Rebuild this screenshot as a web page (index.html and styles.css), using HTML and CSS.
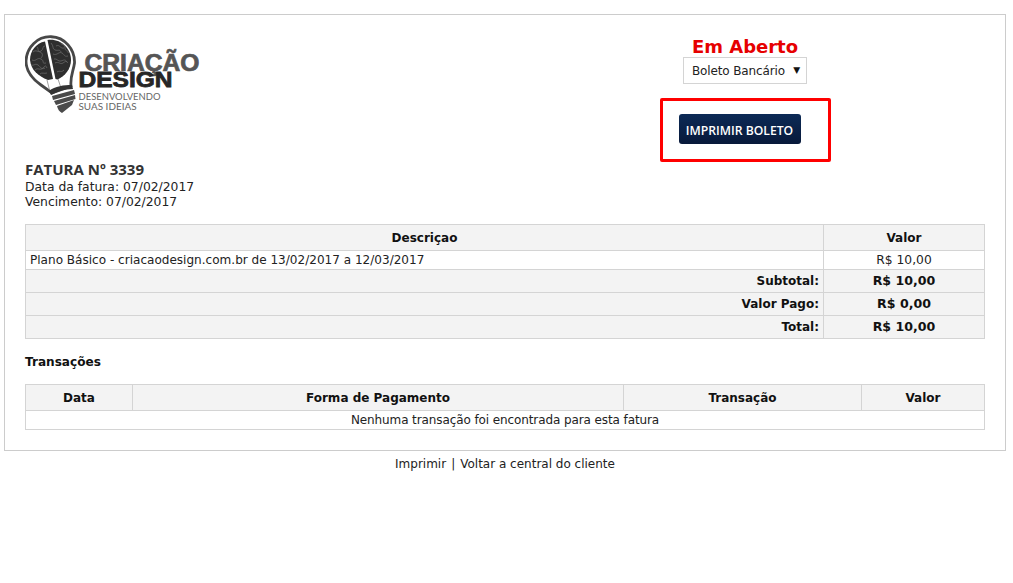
FILE: index.html
```html
<!DOCTYPE html>
<html lang="pt-BR">
<head>
<meta charset="utf-8">
<title>Fatura 3339</title>
<link rel="stylesheet" href="styles.css">
</head>
<body>
<main class="invoice">
  <header class="top">
    <div class="brand">
      <svg class="logo" viewBox="25 34 180 82" width="180" height="82" aria-label="Criação Design">
        <path d="M41 85C31 78 26 70 26 61A24 25 0 1 1 74.500 63C73.500 71 70 76 71 86L52 93Z" fill="#fff" stroke="#484848" stroke-width="2.800"/>
        <path d="M45 41.500C36 43 30 51 30 60C31 70 38 76 48 80L53 79Z" fill="#2e2e2e"/>
        <path d="M47.500 40C60 38 71 48 71 60C71 69 65 76 57.500 79.500L55.500 79Z" fill="#2e2e2e"/>
        <path class="fold" d="M33 52c3-3 5 1 8-1s1-5 4-5M32 60c4 2 5-3 9-1s0 5 5 4M35 70c3-3 5 1 8-2s2-3 4 0M37 47c2 2 0 4 3 5s3 4 1 6M31 65c3 1 4-2 7 0s3 5 7 3M40 74c2-2 4 0 7-1M56 46c4-2 4 3 8 2M53 54c4 2 6-3 9-1s2 4 6 3M55 63c4-2 5 2 8 0s3-2 5 0M57 72c3-2 4 1 7-2M51 43c3 3 1 6 4 7s5-1 6 2M60 42c1 3 5 2 5 6s4 2 3 5M54 59c3-1 4 3 7 2s4-2 6 1"/>
        <path class="wire" d="M47 80L49.500 90M58 79L61 88"/>
        <path d="M49 91C55 86 64 85 72 85L73 89C65 89 58 91 51 95Z" fill="#333"/>
        <path d="M52 96L74 90L75 94L53 100ZM54 101L75 95L75.500 99L56 105ZM57 106L74 100L72 105L62 113Q58 111 57 106Z" fill="#4a4a4a"/>
        <text class="logo-top" x="84.500" y="71" textLength="115" lengthAdjust="spacingAndGlyphs">CRIAÇÃO</text>
        <text class="logo-main" x="78.500" y="87" textLength="94" lengthAdjust="spacingAndGlyphs">DESIGN</text>
        <text class="logo-sub" x="78.500" y="100" textLength="82" lengthAdjust="spacingAndGlyphs">DESENVOLVENDO</text>
        <text class="logo-sub" x="78.500" y="110" textLength="58" lengthAdjust="spacingAndGlyphs">SUAS IDEIAS</text>
      </svg>
      <h1 class="invoice-no">FATURA Nº 3339</h1>
      <div class="dates">
        <p class="meta">Data da fatura: 07/02/2017</p>
        <p class="meta">Vencimento: 07/02/2017</p>
      </div>
    </div>
    <div class="status">
      <div class="status-text">Em Aberto</div>
      <div class="method">Boleto Bancário<span class="caret">▼</span></div>
      <div class="frame"><a class="print-btn">IMPRIMIR BOLETO</a></div>
    </div>
  </header>

  <table class="grid items">
    <thead>
      <tr><th>Descriçao</th><th class="col-val">Valor</th></tr>
    </thead>
    <tbody>
      <tr class="line"><td class="desc">Plano Básico - criacaodesign.com.br de 13/02/2017 a 12/03/2017</td><td class="money">R$ 10,00</td></tr>
      <tr class="sum"><td>Subtotal:</td><td>R$ 10,00</td></tr>
      <tr class="sum"><td>Valor Pago:</td><td>R$ 0,00</td></tr>
      <tr class="sum"><td>Total:</td><td>R$ 10,00</td></tr>
    </tbody>
  </table>

  <h2 class="section">Transações</h2>

  <table class="grid tx">
    <thead>
      <tr><th class="c-date">Data</th><th class="c-form">Forma de Pagamento</th><th class="c-tx">Transação</th><th>Valor</th></tr>
    </thead>
    <tbody>
      <tr class="line"><td colspan="4" class="empty">Nenhuma transação foi encontrada para esta fatura</td></tr>
    </tbody>
  </table>
</main>
<p class="foot"><a>Imprimir</a><span class="sep">|</span><a>Voltar a central do cliente</a></p>
</body>
</html>
```

FILE: styles.css
```css
* { box-sizing: border-box; }
html, body { margin: 0; background: #fff; }
body {
  padding: 14px 7px 0 4px;
  font: 12px/15px "DejaVu Sans", Verdana, sans-serif;
  color: #222;
}
.invoice {
  height: 437px;
  border: 1px solid #ccc;
  padding: 19px 20px 0;
}
.top { display: flex; height: 190px; }
.brand, .status { flex: 0 0 50%; }
.logo { display: block; margin-bottom: 45px; }
.fold { fill: none; stroke: #6e6e6e; stroke-width: .7; }
.wire { fill: none; stroke: #888; stroke-width: .8; }
.logo-top { font: 700 23px "Liberation Sans", sans-serif; fill: #555; stroke: #555; stroke-width: .7; }
.logo-main { font: 700 22px "Liberation Sans", sans-serif; fill: #262626; stroke: #262626; stroke-width: .8; }
.logo-sub { font: 400 10px Lato, sans-serif; fill: #666; }
.invoice-no {
  margin: 0;
  font: 700 15px/17px "Open Sans", sans-serif;
  color: #333;
}
.dates { padding-top: 2px; }
.meta { margin: 0; font-size: 12.35px; line-height: 15px; color: #222; }
.status { display: flex; flex-direction: column; align-items: center; }
.status-text {
  font: 700 18px/22px "DejaVu Sans", sans-serif;
  color: #e60000;
  margin-top: 2px;
}
.method {
  width: 124px;
  height: 27px;
  margin-top: -1px;
  border: 1px solid #d4d4d4;
  padding-left: 8px;
  line-height: 26px;
  letter-spacing: -.13px;
  color: #222;
  position: relative;
}
.caret { position: absolute; right: 6px; top: -1px; font-size: 9px; color: #111; }
.frame {
  margin-top: 14px;
  width: 171px;
  height: 64px;
  border: 3px solid #f00;
  border-radius: 2px;
  padding: 13px 0 0 16px;
}
.print-btn {
  display: block;
  width: 122px;
  height: 30px;
  border-radius: 3px;
  background: linear-gradient(#0c2a56, #08193a);
  color: #fff;
  font: 600 12.2px/33px "Open Sans", sans-serif;
  text-align: center;
  white-space: nowrap;
}
.grid {
  width: 960px;
  border-collapse: collapse;
  table-layout: fixed;
}
.grid th, .grid td { border: 1px solid #d4d4d4; padding: 0 4px; }
.grid th {
  height: 26px;
  padding-top: 2px;
  background: #f3f3f3;
  font-weight: 700;
  font-size: 12px;
  color: #111;
  text-align: center;
}
.line td { height: 19px; background: #fff; color: #222; line-height: 15px; }
.desc { font-size: 12.06px; }
.col-val { width: 161px; }
.money { text-align: center; color: #35506b; font-size: 12.3px; }
.sum td {
  height: 23px;
  background: #f3f3f3;
  font-weight: 700;
  text-align: right;
  color: #111;
}
.grid .sum td:last-child { text-align: center; font-size: 12.6px; padding-bottom: 1px; }
.section {
  margin: 16px 0 14px;
  font-size: 12.1px;
  line-height: 15px;
  font-weight: 700;
  color: #111;
}
.c-date { width: 107px; }
.c-form { width: 491px; }
.c-tx { width: 238px; }
.empty { text-align: center; letter-spacing: -.1px; }
.foot {
  margin: 6px 0 0;
  text-align: center;
  color: #222;
}
.sep { margin: 0 5px; }
```
